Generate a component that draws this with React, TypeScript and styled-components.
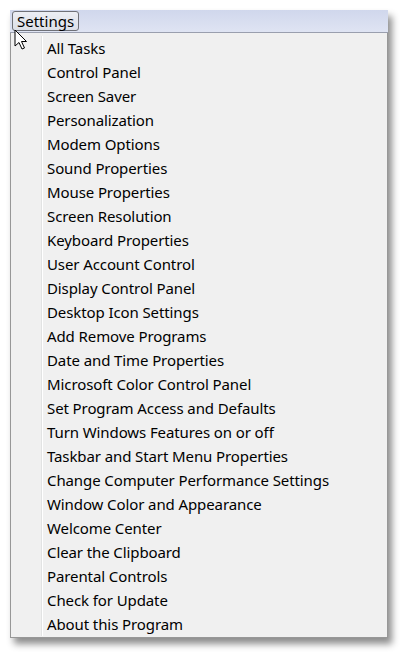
import styled, { createGlobalStyle } from "styled-components";

const items = [
  "All Tasks",
  "Control Panel",
  "Screen Saver",
  "Personalization",
  "Modem Options",
  "Sound Properties",
  "Mouse Properties",
  "Screen Resolution",
  "Keyboard Properties",
  "User Account Control",
  "Display Control Panel",
  "Desktop Icon Settings",
  "Add Remove Programs",
  "Date and Time Properties",
  "Microsoft Color Control Panel",
  "Set Program Access and Defaults",
  "Turn Windows Features on or off",
  "Taskbar and Start Menu Properties",
  "Change Computer Performance Settings",
  "Window Color and Appearance",
  "Welcome Center",
  "Clear the Clipboard",
  "Parental Controls",
  "Check for Update",
  "About this Program",
];

const Global = createGlobalStyle`
  body {
    margin: 0;
    background: #ffffff;
    font-family: "Noto Sans", "Open Sans", sans-serif;
  }
`;

export default function App() {
  return (
    <>
      <Global />
      <Page>
        <Frame>
          <MenuBar>
            <TopItem>Settings</TopItem>
          </MenuBar>
          <Menu>
            {items.map((label) => (
              <Row key={label}>
                <Gutter />
                <Label>{label}</Label>
              </Row>
            ))}
          </Menu>
          <Cursor width="14" height="22" viewBox="0 0 14 22">
            <path
              d="M1 1 L1 17 L5 13.5 L8 20 L10.5 19 L7.5 12.5 L12.5 12.5 Z"
              fill="#ffffff"
              stroke="#000000"
              strokeWidth="1"
              strokeLinejoin="miter"
            />
          </Cursor>
        </Frame>
      </Page>
    </>
  );
}

const Page = styled.div`
  padding: 10px 19px 20px 10px;
`;

const Frame = styled.div`
  position: relative;
  width: 378px;
  box-shadow: 4px 6px 7px rgba(0, 0, 0, 0.45);
`;

const MenuBar = styled.div`
  height: 22px;
  display: flex;
  align-items: center;
  padding-left: 2px;
  background: linear-gradient(#d0d7ec, #dfe4f3);
  border-bottom: 1px solid #9a9fae;
`;

const TopItem = styled.div`
  height: 20px;
  padding: 0 4px;
  display: flex;
  align-items: center;
  font-size: 15px;
  color: #000;
  background: linear-gradient(#eceef4, #dcdfe7);
  border: 1px solid #6f7178;
  border-radius: 3px;
  box-sizing: border-box;
`;

const Menu = styled.div`
  background: #f0f0f0;
  border: 1px solid #979797;
  border-top: none;
  padding: 3px 0 1px 2px;
`;

const Row = styled.div`
  height: 24px;
  display: flex;
  align-items: center;
`;

const Gutter = styled.div`
  width: 28px;
  height: 100%;
  margin-right: 5px;
  border-right: 1px solid #e2e3e3;
  box-shadow: 1px 0 0 #ffffff;
`;

const Label = styled.span`
  font-size: 15px;
  letter-spacing: -0.1px;
  color: #000;
`;

const Cursor = styled.svg`
  position: absolute;
  left: 4px;
  top: 19px;
`;
